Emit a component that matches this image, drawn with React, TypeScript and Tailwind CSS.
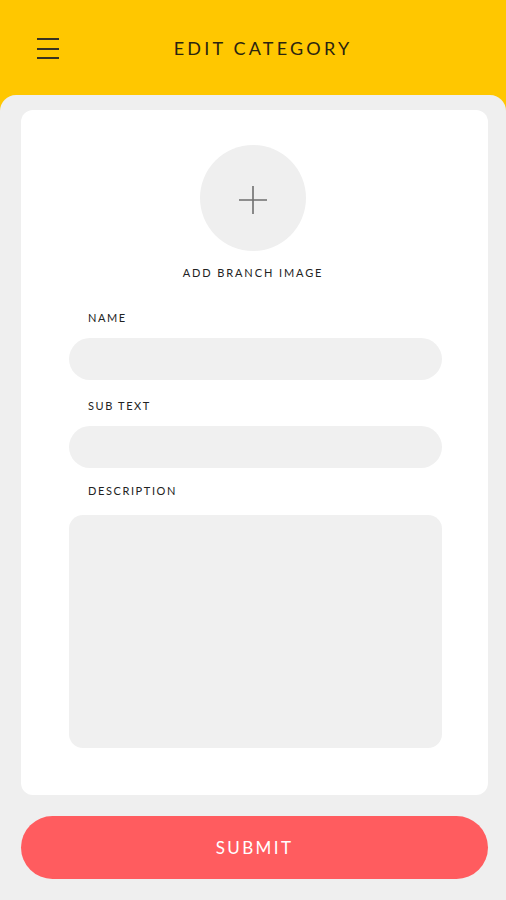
export default function App() {
  const font = { fontFamily: 'Lato, "Open Sans", sans-serif' }

  return (
    <div className="min-h-[900px] w-full bg-[#ffc700]" style={font}>
      {/* Top bar */}
      <div className="relative flex h-[95px] items-center justify-center">
        <button className="absolute left-[37px] top-[38px] flex h-[21px] w-[22px] flex-col justify-between">
          <span className="block h-[2px] w-full bg-[#3a3320]" />
          <span className="block h-[2px] w-full bg-[#3a3320]" />
          <span className="block h-[2px] w-full bg-[#3a3320]" />
        </button>
        <h1 className="mt-[2px] ml-[20px] text-[18px] font-normal tracking-[3.2px] text-[#2b2410]">EDIT CATEGORY</h1>
      </div>

      {/* Body */}
      <div className="min-h-[805px] rounded-t-[16px] bg-[#efefef] pl-[21px] pr-[18px] pt-[15px] pb-[21px]">
        <div className="flex h-[685px] flex-col rounded-[12px] bg-white pl-[48px] pr-[46px] pt-[35px]">
          <div className="flex flex-col items-center pr-[5px]">
            <div className="flex h-[106px] w-[106px] items-center justify-center rounded-full bg-[#efefef]">
              <svg width="32" height="32" viewBox="0 0 32 32" className="mt-[3px]">
                <path d="M16 2v28M2 16h28" stroke="#6f6f6f" strokeWidth="1.6" />
              </svg>
            </div>
            <span className="mt-[15px] text-[11px] leading-[14px] tracking-[1.9px] text-[#222]">ADD BRANCH IMAGE</span>
          </div>

          <label className="mt-[31px] pl-[19px] text-[11px] leading-[14px] tracking-[1.6px] text-[#222]">NAME</label>
          <input className="mt-[13px] h-[42px] w-full rounded-full bg-[#f0f0f0] px-5 outline-none" />

          <label className="mt-[19px] pl-[19px] text-[11px] leading-[14px] tracking-[1.6px] text-[#222]">SUB TEXT</label>
          <input className="mt-[13px] h-[42px] w-full rounded-full bg-[#f0f0f0] px-5 outline-none" />

          <label className="mt-[16px] pl-[19px] text-[11px] leading-[14px] tracking-[1.6px] text-[#222]">DESCRIPTION</label>
          <textarea className="mt-[17px] h-[233px] w-full resize-none rounded-[14px] bg-[#f0f0f0] p-4 outline-none" />
        </div>

        <button className="mt-[21px] flex h-[63px] w-full items-center justify-center rounded-full bg-[#ff5c5f] text-[17px] tracking-[2.4px] text-white">
          SUBMIT
        </button>
      </div>
    </div>
  )
}
